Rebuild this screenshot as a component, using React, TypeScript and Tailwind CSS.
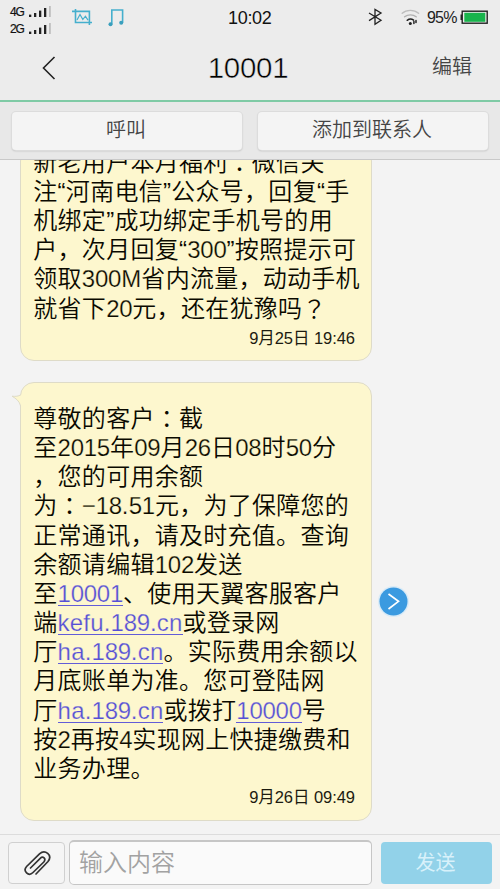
import type { ReactNode } from 'react';

function Signal({ label }: { label: string }) {
  return (
    <div className="flex h-[17px] items-center gap-[4px]">
      <span className="w-[15px] text-[12px] leading-none font-normal tracking-[-1.2px] text-[#111] [-webkit-text-stroke:0.2px_#111]">
        {label}
      </span>
      <svg width="23" height="12" viewBox="0 0 23 12">
        <rect x="0" y="8.6" width="2.3" height="2.4" fill="#222" />
        <rect x="5" y="7" width="2.3" height="4" fill="#222" />
        <rect x="10" y="4.6" width="2.3" height="6.4" fill="#222" />
        <rect x="15" y="2" width="2.3" height="9" fill="#222" />
        <rect x="20" y="0" width="1.8" height="11" fill="#bdbdbd" />
      </svg>
    </div>
  );
}

function StatusBar() {
  return (
    <div className="flex h-[36px] items-start">
      <div className="flex w-[72px] flex-col pt-[3px] pl-[10px]">
        <Signal label="4G" />
        <Signal label="2G" />
      </div>
      <svg className="mt-[8px]" width="20" height="18" viewBox="0 0 20 18" fill="none" stroke="#45afcd" strokeWidth="1.6">
        <path d="M3.5 1v13.5H20M0 3.4h17.4V17" />
        <path d="M5 12l3-5.5 2.8 5 2.6-3.3 2.6 4" strokeWidth="1.2" />
      </svg>
      <svg className="mt-[8px] ml-[16px]" width="17" height="19" viewBox="0 0 17 19" fill="none" stroke="#45afcd" strokeWidth="1.6">
        <path d="M3.8 16.3V2h10.8v12.8" />
        <circle cx="2.5" cy="16.2" r="2" fill="#3a9fbd" stroke="none" />
        <circle cx="13.2" cy="14.8" r="2" fill="#3a9fbd" stroke="none" />
      </svg>
      <span className="mt-[8px] ml-[103px] w-[46px] text-[18px] leading-[20px] tracking-[-0.3px] text-[#111]">10:02</span>
      <svg className="mt-[8px] ml-[94px]" width="16" height="18" viewBox="0 0 16 18" fill="none" stroke="#222" strokeWidth="1.3">
        <path d="M1 5l12 7.3-6 3.9V1.4l6 3.6L1 12.6" />
      </svg>
      <svg className="mt-[8px] ml-[17px]" width="19" height="18" viewBox="0 0 19 18" fill="none" strokeLinecap="round">
        <path d="M1.2 5.2C5.5 1.4 13 1.4 17.6 5.2" stroke="#bdbdbd" strokeWidth="1.4" />
        <path d="M3.6 8.8c3.3-2.6 8.4-2.6 11.6 0" stroke="#b0b0b0" strokeWidth="1.4" />
        <path d="M6.2 12.3c2-1.6 4.4-1.6 6.4-.2" stroke="#222" strokeWidth="1.5" />
        <circle cx="9.3" cy="15.6" r="1.5" fill="#222" />
        <path d="M12.9 13.4v2.2M15 12.4v2.2" stroke="#222" strokeWidth="1.5" />
      </svg>
      <span className="mt-[8px] ml-[7px] w-[33px] text-[16px] leading-[20px] tracking-[-0.8px] text-[#222]">95%</span>
      <svg className="mt-[10px]" width="28" height="15" viewBox="0 0 28 15">
        <rect x="0.5" y="4.5" width="2.5" height="5.5" fill="#222" />
        <rect x="2.2" y="1.2" width="25" height="12" fill="#ececec" stroke="#222" strokeWidth="1.4" />
        <rect x="4.3" y="2.8" width="21" height="9" fill="#18b44c" />
      </svg>
    </div>
  );
}

/* Latin runs are set thin, digits tight; full-width colons and question marks sit in the middle of their cell. */
function typeset(text: string) {
  return text.split(/([：？]|[−0-9]+|[A-Za-z.]+)/).map((s, i) => {
    if (s === '：' || s === '？') {
      return (
        <span key={i} lang="zh-TW" className="inline-block h-[24px] align-top leading-[27px] font-['Noto_Sans_CJK_TC',sans-serif]">
          {s}
        </span>
      );
    }
    if (/^[−0-9]+$/.test(s)) {
      return (
        <span key={i} className="tracking-[-0.25px] [-webkit-text-stroke:0.25px_#fdf7ce]">
          {s}
        </span>
      );
    }
    if (/^[A-Za-z.]+$/.test(s)) {
      return (
        <span key={i} className="tracking-[0.2px] [-webkit-text-stroke:0.25px_#fdf7ce]">
          {s}
        </span>
      );
    }
    return s;
  });
}

function Line({ children }: { children: ReactNode }) {
  const parts = Array.isArray(children) ? children : [children];
  return (
    <div className="h-[29.2px] font-[350] tracking-[0.28px] whitespace-nowrap">
      {parts.map((part, i) => (
        <span key={i}>{typeof part === 'string' ? typeset(part) : part}</span>
      ))}
    </div>
  );
}

function Link({ children }: { children: string }) {
  return (
    <a className="inline-block h-[27px] border-b-[1.5px] border-[#625cd8] align-top text-[#5650d6]">{typeset(children)}</a>
  );
}

function Bubble({ time, tail, className, children }: { time: string; tail?: boolean; className: string; children: ReactNode }) {
  return (
    <div
      className={`relative flex w-[352px] shrink-0 flex-col rounded-[14px] border border-[#dedbc8] bg-[#fdf7ce] pl-[12.3px] text-[24px] leading-[29.2px] text-[#0a0900] ${className}`}
    >
      {tail && (
        <svg className="absolute top-[10px] -left-[10px]" width="12" height="15" viewBox="0 0 12 15">
          <path d="M12 0.5C10 3 5 3.6 1 3.2C5 5.5 8.5 8 9.6 13H12Z" fill="#fdf7ce" />
          <path d="M9.8 1.8C7.5 3.3 4.5 3.6 1 3.2C5 5.5 8.5 8 9.6 13" fill="none" stroke="#dedbc8" />
        </svg>
      )}
      {children}
      <div className={`pr-[16px] text-right text-[16.5px] leading-[20px] tracking-[-0.05px] text-[#1c1b10] ${tail ? 'mt-[4px]' : 'mt-[5.5px]'}`}>
        {time}
      </div>
    </div>
  );
}

export default function App() {
  return (
    <div className="flex h-[889px] w-[500px] flex-col overflow-hidden bg-[#f3f3f3] font-['Liberation_Sans','Noto_Sans_CJK_SC',sans-serif]" lang="zh-CN">
      <header className="h-[102px] shrink-0 border-b-2 border-[#7fcaa5] bg-[#ececec]">
        <StatusBar />
        <div className="flex h-[64px] items-center">
          <svg className="ml-[42px]" width="14" height="24" viewBox="0 0 14 24" fill="none" stroke="#222" strokeWidth="1.6">
            <path d="M12.5 1L1.5 12l11 11" />
          </svg>
          <h1 className="ml-[151px] w-[82px] text-center text-[29.5px] leading-[36px] tracking-[-0.3px] text-[#000] [-webkit-text-stroke:0.5px_#ececec]">
            10001
          </h1>
          <span className="ml-[143px] pb-[2px] text-[20px] leading-[28px] font-[350] text-[#444]">编辑</span>
        </div>
      </header>

      <div className="flex h-[58px] shrink-0 items-center gap-[16px] border-b border-[#c9c9c9] bg-[#e8e8e8] px-[12px]">
        <button className="h-[38px] w-[230px] rounded-[4px] bg-[#f4f4f4] pr-[2px] pb-[2px] text-[20px] leading-[34px] font-[350] text-[#444] shadow-[0_0_0_1px_#dcdcdc,0_1px_2px_#b4b4b4]">
          呼叫
        </button>
        <button className="h-[38px] w-[230px] rounded-[4px] bg-[#f4f4f4] pr-[2px] pb-[2px] text-[20px] leading-[34px] font-[350] text-[#444] shadow-[0_0_0_1px_#dcdcdc,0_1px_2px_#b4b4b4]">
          添加到联系人
        </button>
      </div>

      <main className="flex min-h-0 flex-1 flex-col justify-end gap-[21px] overflow-hidden pb-[13.5px] pl-[20px]">
        <Bubble time="9月25日 19:46" className="pb-[12px]">
          <Line>新老用户本月福利：微信关</Line>
          <Line>注“河南电信”公众号，回复“手</Line>
          <Line>机绑定”成功绑定手机号的用</Line>
          <Line>户，次月回复“300”按照提示可</Line>
          <Line>领取300M省内流量，动动手机</Line>
          <Line>就省下20元，还在犹豫吗？</Line>
        </Bubble>

        <div className="flex shrink-0 items-center gap-[6px]">
          <Bubble time="9月26日 09:49" tail className="pt-[20.5px] pb-[12.3px]">
            <Line>尊敬的客户：截</Line>
            <Line>至2015年09月26日08时50分</Line>
            <Line>，您的可用余额</Line>
            <Line>为：−18.51元，为了保障您的</Line>
            <Line>正常通讯，请及时充值。查询</Line>
            <Line>余额请编辑102发送</Line>
            <Line>至<Link>10001</Link>、使用天翼客服客户</Line>
            <Line>端<Link>kefu.189.cn</Link>或登录网</Line>
            <Line>厅<Link>ha.189.cn</Link>。实际费用余额以</Line>
            <Line>月底账单为准。您可登陆网</Line>
            <Line>厅<Link>ha.189.cn</Link>或拨打<Link>10000</Link>号</Line>
            <Line>按2再按4实现网上快捷缴费和</Line>
            <Line>业务办理。</Line>
          </Bubble>
          <svg width="31" height="31" viewBox="0 0 31 31">
            <circle cx="15.5" cy="15.5" r="15.5" fill="#d9ebf7" />
            <circle cx="15.5" cy="15.5" r="14" fill="#3b9ae0" />
            <path d="M10.5 8l10 7.3L10.5 23" fill="none" stroke="#fff" strokeWidth="1.7" />
          </svg>
        </div>
      </main>

      <footer className="flex h-[55px] shrink-0 items-start border-t border-[#dcdcdc] bg-[#f3f3f3] pl-[8px]">
        <button className="mt-[7px] flex h-[42px] w-[57px] items-center justify-center rounded-[4px] border border-[#d0d0d0] bg-[#f5f5f5]">
          <svg width="28" height="26" viewBox="0 0 28 26" fill="none" stroke="#333" strokeWidth="1.7" strokeLinecap="round">
            <path d="M13 24L25 11.5C30 5 22 -1 16.5 3.8L3.6 16.5C-0.5 21 5.5 27 10 22.5L20.8 12C23.5 8.5 20 5.8 17.2 8.3L7.5 18" />
          </svg>
        </button>
        <div className="mt-[5px] ml-[4px] flex h-[45px] w-[303px] items-center rounded-[5px] border border-t-2 border-[#c6c6c6] bg-[#fafafa] pb-[1px] pl-[9px] text-[24px] leading-[30px] font-[350] text-[#a2a2a2]">
          输入内容
        </div>
        <button className="mt-[7px] ml-[9px] h-[42px] w-[111px] rounded-[4px] bg-[#92d2e9] pr-[2px] text-[20px] leading-[40px] text-[#d8f1fa]">发送</button>
      </footer>
    </div>
  );
}
